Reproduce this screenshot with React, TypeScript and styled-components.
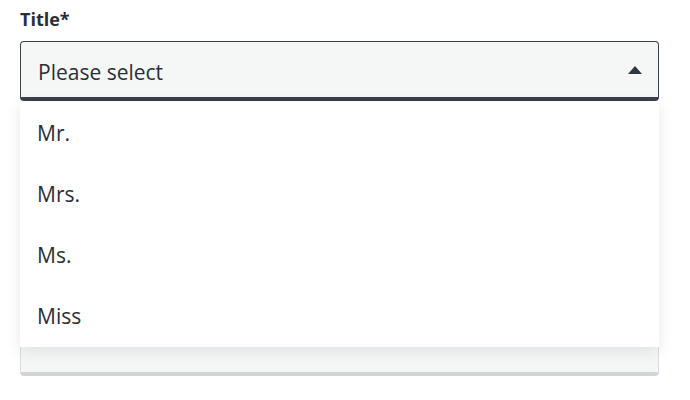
import React from "react";
import styled, { createGlobalStyle } from "styled-components";

const GlobalStyle = createGlobalStyle`
  body {
    margin: 0;
    background: #ffffff;
    font-family: "Open Sans", "Liberation Sans", sans-serif;
    color: #2a2f37;
  }
`;

const Page = styled.div`
  padding: 8px 31px 0 20px;
  display: flex;
  flex-direction: column;
`;

const Label = styled.label`
  display: block;
  font-size: 18px;
  font-weight: 700;
  line-height: 22px;
  margin-bottom: 11px;
  color: #2a2f37;
`;

const FieldWrap = styled.div`
  position: relative;
`;

const SelectBox = styled.div<{ $muted?: boolean }>`
  box-sizing: border-box;
  height: 60px;
  display: flex;
  align-items: center;
  justify-content: space-between;
  padding: 4px 16px 0 17px;
  background: #f5f7f7;
  border: 1px solid ${p => (p.$muted ? "#d9dde1" : "#3a414c")};
  border-bottom: 4px solid ${p => (p.$muted ? "#d0d5da" : "#3a414c")};
  border-radius: 4px;
  font-size: 21px;
  color: #2a2f37;
`;

const Caret = styled.span`
  width: 0;
  height: 0;
  border-left: 7px solid transparent;
  border-right: 7px solid transparent;
  border-bottom: 8px solid #2f3640;
  margin-top: -4px;
`;

const Menu = styled.ul`
  position: absolute;
  top: 100%;
  left: 0;
  right: 0;
  margin: 1px 0 0;
  padding: 0;
  list-style: none;
  background: #ffffff;
  box-shadow: 0 4px 14px rgba(20, 30, 40, 0.1);
  z-index: 2;
`;

const MenuItem = styled.li`
  height: 61.25px;
  display: flex;
  align-items: center;
  padding: 0 17px;
  font-size: 21px;
  color: #2a2f37;
`;

const NextField = styled.div`
  margin-top: 215px;
`;

const titles = ["Mr.", "Mrs.", "Ms.", "Miss"];

export default function App() {
  return (
    <>
      <GlobalStyle />
      <Page>
        <Label>Title*</Label>
        <FieldWrap>
          <SelectBox>
            <span>Please select</span>
            <Caret />
          </SelectBox>
          <Menu>
            {titles.map(t => (
              <MenuItem key={t}>{t}</MenuItem>
            ))}
          </Menu>
        </FieldWrap>
        <NextField>
          <SelectBox $muted />
        </NextField>
      </Page>
    </>
  );
}
